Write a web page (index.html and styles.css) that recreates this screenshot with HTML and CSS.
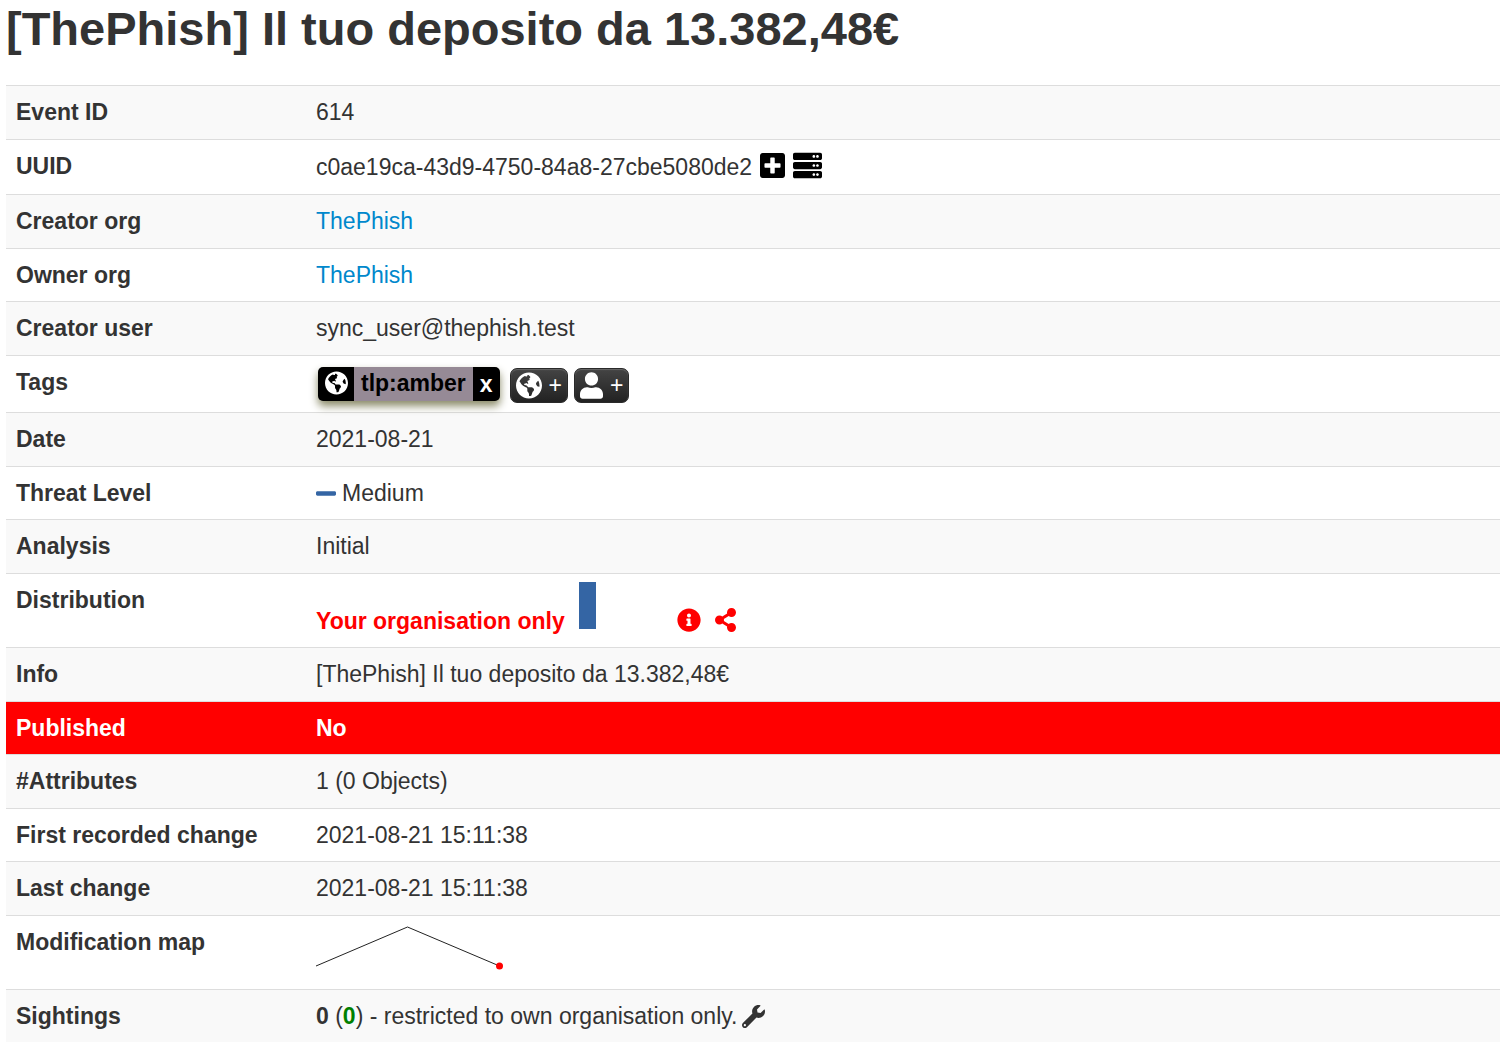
FILE: index.html
```html
<!DOCTYPE html>
<html lang="en">
<head>
<meta charset="utf-8">
<title>[ThePhish] Il tuo deposito da 13.382,48€</title>
<meta name="viewport" content="width=device-width, initial-scale=1">
<link rel="stylesheet" href="styles.css">
</head>
<body>
<svg class="sprite" aria-hidden="true">
  <symbol id="globe" viewBox="0 0 496 512"><path d="M248 8C111.03 8 0 119.03 0 256s111.03 248 248 248 248-111.03 248-248S384.97 8 248 8zm82.29 357.6c-3.9 3.88-7.99 7.95-11.31 11.28-2.99 3-5.1 6.7-6.17 10.71-1.51 5.66-2.73 11.38-4.77 16.87l-17.39 46.85c-13.76 3-28 4.69-42.65 4.69v-27.38c1.69-12.62-7.64-36.26-22.63-51.25-6-6-9.37-14.14-9.37-22.63v-32.01c0-11.64-6.27-22.34-16.46-27.97-14.37-7.95-34.81-19.06-48.81-26.11-11.48-5.78-22.1-13.14-31.65-21.75l-.8-.72a114.792 114.792 0 0 1-18.06-20.74c-9.38-13.77-24.66-36.42-34.59-51.14 20.47-45.5 57.36-82.04 103.2-101.89l24.01 12.01C203.48 89.74 216 82.01 216 70.11v-11.3c7.99-1.29 16.12-2.11 24.39-2.42l28.3 28.3c6.25 6.25 6.25 16.38 0 22.63L264 112l-10.34 10.34c-3.12 3.12-3.12 8.19 0 11.31l4.69 4.69c3.12 3.12 3.12 8.19 0 11.31l-8 8a8.008 8.008 0 0 1-5.66 2.34h-8.99c-2.08 0-4.08.81-5.58 2.27l-9.92 9.65a8.008 8.008 0 0 0-1.58 9.31l15.59 31.19c2.66 5.32-1.21 11.58-7.15 11.58h-5.64c-1.93 0-3.79-.7-5.24-1.96l-9.28-8.06a16.017 16.017 0 0 0-15.55-3.1l-31.17 10.39a11.95 11.95 0 0 0-8.17 11.34c0 4.53 2.56 8.66 6.61 10.69l11.08 5.54c9.41 4.71 19.79 7.16 30.31 7.16s22.59 27.29 32 32h66.75c8.49 0 16.62 3.37 22.63 9.37l13.69 13.69a30.503 30.503 0 0 1 8.93 21.57 46.536 46.536 0 0 1-13.72 32.98zM417 274.25c-5.79-1.45-10.84-5-14.15-9.97l-17.98-26.97a23.97 23.97 0 0 1 0-26.62l19.59-29.38c2.32-3.47 5.5-6.29 9.24-8.15l12.98-6.49C440.2 193.59 448 223.87 448 256c0 8.67-.74 17.16-1.82 25.54L417 274.25z"/></symbol>
</svg>
<main class="event">
  <h1 class="event-title">[ThePhish] Il tuo deposito da 13.382,48€</h1>
  <table class="details">
    <tbody>
      <tr><th scope="row">Event ID</th><td>614</td></tr>
      <tr>
        <th scope="row">UUID</th>
        <td>
          <div class="uuid">
            <span>c0ae19ca-43d9-4750-84a8-27cbe5080de2</span>
            <button class="icon-button" type="button" aria-label="Extend event"><svg class="icon" width="25" height="29" viewBox="0 0 448 512"><path d="M400 32H48C21.5 32 0 53.5 0 80v352c0 26.5 21.5 48 48 48h352c26.5 0 48-21.5 48-48V80c0-26.5-21.5-48-48-48zm-32 252c0 6.6-5.4 12-12 12h-92v92c0 6.6-5.4 12-12 12h-56c-6.6 0-12-5.4-12-12v-92H92c-6.6 0-12-5.4-12-12v-56c0-6.6 5.4-12 12-12h92v-92c0-6.6 5.4-12 12-12h56c6.6 0 12 5.4 12 12v92h92c6.6 0 12 5.4 12 12v56z"/></svg></button>
            <button class="icon-button" type="button" aria-label="Check servers"><svg class="icon" width="29" height="29" viewBox="0 0 512 512"><path d="M480 160H32c-17.673 0-32-14.327-32-32V64c0-17.673 14.327-32 32-32h448c17.673 0 32 14.327 32 32v64c0 17.673-14.327 32-32 32zm-48-88c-13.255 0-24 10.745-24 24s10.745 24 24 24 24-10.745 24-24-10.745-24-24-24zm-64 0c-13.255 0-24 10.745-24 24s10.745 24 24 24 24-10.745 24-24-10.745-24-24-24zm112 248H32c-17.673 0-32-14.327-32-32v-64c0-17.673 14.327-32 32-32h448c17.673 0 32 14.327 32 32v64c0 17.673-14.327 32-32 32zm-48-88c-13.255 0-24 10.745-24 24s10.745 24 24 24 24-10.745 24-24-10.745-24-24-24zm-64 0c-13.255 0-24 10.745-24 24s10.745 24 24 24 24-10.745 24-24-10.745-24-24-24zm112 248H32c-17.673 0-32-14.327-32-32v-64c0-17.673 14.327-32 32-32h448c17.673 0 32 14.327 32 32v64c0 17.673-14.327 32-32 32zm-48-88c-13.255 0-24 10.745-24 24s10.745 24 24 24 24-10.745 24-24-10.745-24-24-24zm-64 0c-13.255 0-24 10.745-24 24s10.745 24 24 24 24-10.745 24-24-10.745-24-24-24z"/></svg></button>
          </div>
        </td>
      </tr>
      <tr><th scope="row">Creator org</th><td><a href="#creator">ThePhish</a></td></tr>
      <tr><th scope="row">Owner org</th><td><a href="#owner">ThePhish</a></td></tr>
      <tr><th scope="row">Creator user</th><td>sync_user@thephish.test</td></tr>
      <tr>
        <th scope="row">Tags</th>
        <td>
          <div class="tags">
            <div class="tag">
              <span class="tag-scope"><svg class="icon" width="23" height="24"><use href="#globe"/></svg></span>
              <a class="tag-name" href="#tlp-amber">tlp:amber</a>
              <button class="tag-remove" type="button" aria-label="Remove tag">x</button>
            </div>
            <button class="add-button" type="button" aria-label="Add a tag"><svg class="icon" width="26" height="27"><use href="#globe"/></svg><span>+</span></button>
            <button class="add-button" type="button" aria-label="Add a local tag"><svg class="icon" width="23" height="27" viewBox="0 0 448 512"><path d="M224 256c70.7 0 128-57.3 128-128S294.7 0 224 0 96 57.3 96 128s57.3 128 128 128zm89.6 32h-16.7c-22.2 10.2-46.9 16-72.9 16s-50.6-5.8-72.9-16h-16.7C60.2 288 0 348.2 0 422.4V464c0 26.5 21.5 48 48 48h352c26.5 0 48-21.5 48-48v-41.6c0-74.2-60.2-134.4-134.4-134.4z"/></svg><span>+</span></button>
          </div>
        </td>
      </tr>
      <tr><th scope="row">Date</th><td>2021-08-21</td></tr>
      <tr>
        <th scope="row">Threat Level</th>
        <td>
          <div class="threat">
            <svg class="icon threat-mark" width="20" height="23" viewBox="0 0 448 512"><path d="M416 208H32c-17.67 0-32 14.33-32 32v32c0 17.67 14.33 32 32 32h384c17.67 0 32-14.33 32-32v-32c0-17.67-14.33-32-32-32z"/></svg>
            <span>Medium</span>
          </div>
        </td>
      </tr>
      <tr><th scope="row">Analysis</th><td>Initial</td></tr>
      <tr>
        <th scope="row">Distribution</th>
        <td class="graph-cell">
          <div class="distribution">
            <strong>Your organisation only</strong>
            <svg class="bars" width="84" height="47"><rect width="17" height="47"/></svg>
            <button class="icon-button" type="button" aria-label="Distribution information"><svg class="icon" width="24" height="24" viewBox="0 0 512 512"><path d="M256 8C119.043 8 8 119.083 8 256c0 136.997 111.043 248 248 248s248-111.003 248-248C504 119.083 392.957 8 256 8zm0 110c23.196 0 42 18.804 42 42s-18.804 42-42 42-42-18.804-42-42 18.804-42 42-42zm56 254c0 6.627-5.373 12-12 12h-88c-6.627 0-12-5.373-12-12v-24c0-6.627 5.373-12 12-12h12v-64h-12c-6.627 0-12-5.373-12-12v-24c0-6.627 5.373-12 12-12h64c6.627 0 12 5.373 12 12v100h12c6.627 0 12 5.373 12 12v24z"/></svg></button>
            <button class="icon-button" type="button" aria-label="Distribution graph"><svg class="icon" width="21" height="24" viewBox="0 0 448 512"><path d="M352 320c-22.608 0-43.387 7.819-59.79 20.895l-102.486-64.054a96.551 96.551 0 0 0 0-41.683l102.486-64.054C308.613 184.181 329.392 192 352 192c53.019 0 96-42.981 96-96S405.019 0 352 0s-96 42.981-96 96c0 7.158.79 14.13 2.276 20.841L155.79 180.895C139.387 167.819 118.608 160 96 160c-53.019 0-96 42.981-96 96s42.981 96 96 96c22.608 0 43.387-7.819 59.79-20.895l102.486 64.054A96.301 96.301 0 0 0 256 416c0 53.019 42.981 96 96 96s96-42.981 96-96-42.981-96-96-96z"/></svg></button>
          </div>
        </td>
      </tr>
      <tr><th scope="row">Info</th><td>[ThePhish] Il tuo deposito da 13.382,48€</td></tr>
      <tr class="unpublished"><th scope="row">Published</th><td>No</td></tr>
      <tr><th scope="row">#Attributes</th><td>1 (0 Objects)</td></tr>
      <tr><th scope="row">First recorded change</th><td>2021-08-21 15:11:38</td></tr>
      <tr><th scope="row">Last change</th><td>2021-08-21 15:11:38</td></tr>
      <tr>
        <th scope="row">Modification map</th>
        <td class="graph-cell">
          <svg class="sparkline" width="188" height="56" viewBox="0 0 188 56"><path d="M0 42L91.500 3L183.500 42"/><circle cx="183.500" cy="42" r="3.500"/></svg>
        </td>
      </tr>
      <tr>
        <th scope="row">Sightings</th>
        <td>
          <div class="sightings">
            <span><b>0</b> (<b class="own">0</b>) - restricted to own organisation only.</span>
            <button class="icon-button" type="button" aria-label="Sighting settings"><svg class="icon" width="23" height="23" viewBox="0 0 512 512"><path d="M507.73 109.1c-2.24-9.03-13.54-12.09-20.12-5.51l-74.36 74.36-67.88-11.31-11.31-67.88 74.36-74.36c6.62-6.62 3.43-17.9-5.66-20.16-47.38-11.74-99.55.91-136.58 37.93-39.64 39.64-50.55 97.1-34.05 147.2L18.74 402.76c-24.99 24.99-24.99 65.51 0 90.5 24.99 24.99 65.51 24.99 90.5 0l213.21-213.21c50.12 16.71 107.47 5.68 147.37-34.22 37.07-37.07 49.7-89.32 37.91-136.73zM64 472c-13.25 0-24-10.75-24-24 0-13.26 10.75-24 24-24s24 10.74 24 24c0 13.25-10.75 24-24 24z"/></svg></button>
          </div>
        </td>
      </tr>
    </tbody>
  </table>
</main>
</body>
</html>
```
FILE: styles.css
```css
* { box-sizing: border-box; }

body {
  margin: 0;
  background: #fff;
  color: #333;
  font: 23px/33px "Liberation Sans", Arial, sans-serif;
}

button {
  margin: 0;
  padding: 0;
  border: 0;
  background: none;
  color: inherit;
  font: inherit;
  cursor: pointer;
}

a { color: #0088cc; text-decoration: none; }

.sprite { display: none; }
.icon { display: block; flex: none; fill: currentColor; }

.event { padding-left: 6px; }

.event-title {
  margin: 0;
  padding-bottom: 28px;
  font-size: 47px;
  line-height: 57px;
}

.details {
  width: 100%;
  border-spacing: 0;
}

.details th,
.details td {
  padding: 10px;
  border-top: 1px solid #ddd;
  text-align: left;
  vertical-align: top;
}

.details th { width: 300px; white-space: nowrap; }

.details tr:nth-child(odd) > * { background: #f9f9f9; }
.details tr:nth-child(even) > * { padding-bottom: 9px; }

.details .unpublished > * {
  background: #f00;
  color: #fff;
  font-weight: bold;
}

.details .graph-cell { padding-top: 8px; }

.icon-button { display: flex; align-items: center; }

.uuid {
  display: flex;
  align-items: center;
  gap: 8px;
  height: 35px;
}

.uuid .icon-button { padding-bottom: 5px; color: #000; }

.tags {
  display: flex;
  align-items: flex-end;
  gap: 6px;
  height: 37px;
  padding-left: 2px;
}

.tag {
  display: flex;
  height: 34px;
  margin: 0 4px 2px 0;
  border-radius: 5px;
  background: #000;
  box-shadow: 0 5px 8px #8a8a68;
  color: #fff;
  font-weight: bold;
}

.tag-scope { padding: 4px 6px 6px 7px; }
.tag-name { padding: 0 7px; background: #968a96; color: #000; }
.tag-remove { padding: 0 7px; }

.add-button {
  display: flex;
  align-items: center;
  gap: 7px;
  height: 35px;
  padding: 0 5px;
  border: 1px solid #2a2a2a;
  border-radius: 7px;
  background: linear-gradient(#444, #222);
  box-shadow: inset 0 1px 1px #666;
  color: #fff;
}

.threat { display: flex; align-items: center; gap: 6px; }
.threat-mark { color: #3465a4; }

.distribution {
  display: flex;
  align-items: flex-end;
  gap: 14px;
  height: 56px;
  color: #f00;
}

.distribution .icon-button { height: 33px; padding-bottom: 3px; }
.bars { align-self: flex-start; fill: #3465a4; }

.sparkline { display: block; }
.sparkline path { fill: none; stroke: #222; }
.sparkline circle { fill: #f00; }

.sightings { display: flex; align-items: center; gap: 5px; }
.own { color: #008000; }
```
